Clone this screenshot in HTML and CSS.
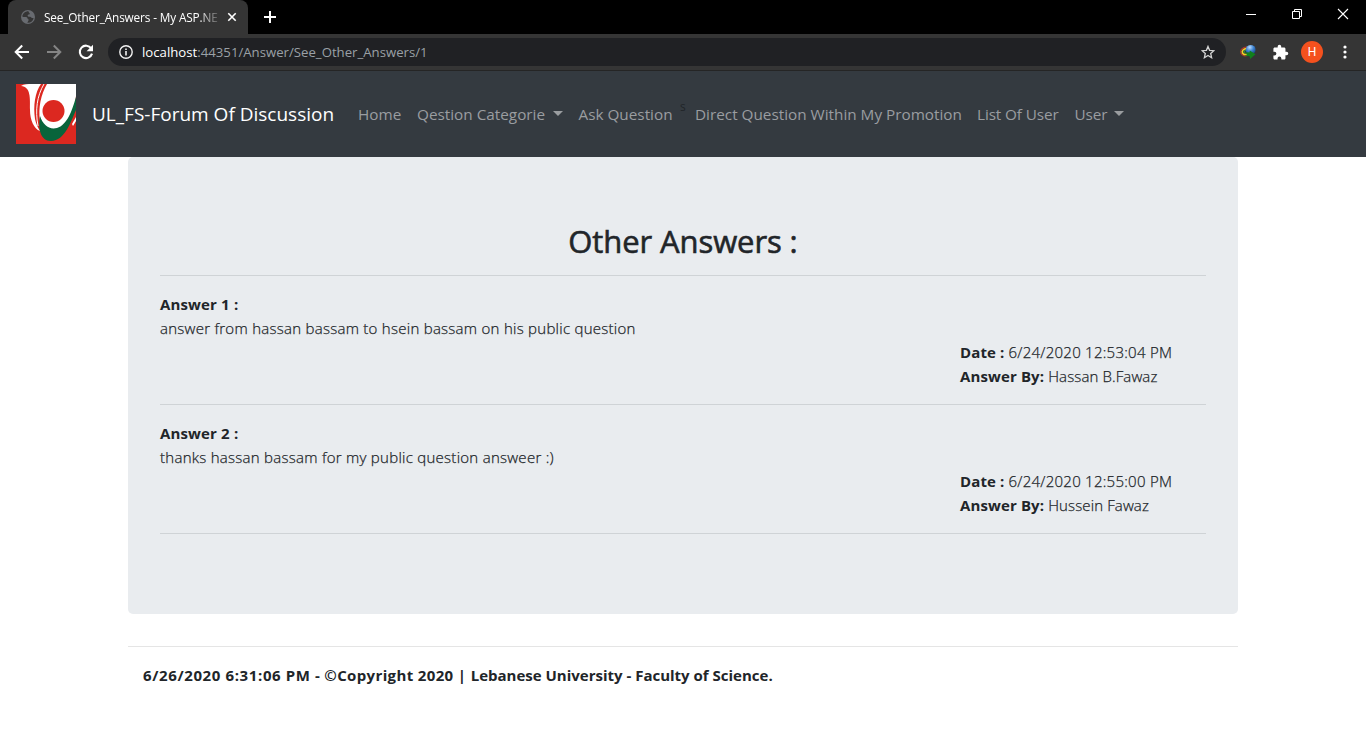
FILE: index.html
```
<!DOCTYPE html>
<html lang="en">
<head>
<meta charset="utf-8">
<title>See_Other_Answers - My ASP.NET Application</title>
<link rel="stylesheet" href="styles.css">
</head>
<body>
<div class="browser">
  <div class="tabstrip">
    <div class="tab">
      <svg class="favicon" viewBox="0 0 14 14"><circle cx="7" cy="7" r="7" fill="#686b70"/><path d="M7.6 1.2C4.6 1 1.5 3.3 1.3 6.4c1 .9 2.700.6 3.700.6 1.300 0 1.600 1.200 1.700 2 .9.1 1.300.7.8 1.600L6.300 12.700c3.500.3 5.800-1.900 6.300-4.800-1.300.5-2.100-.2-2.900-.9-.8-.6-1.700-.1-2.600-.6-.8-.6-.5-1.700.5-1.900 1.100-.1 1.600-.9.8-1.600-.5-.5-1-.8-.8-1.700z" fill="#353535"/></svg>
      <span class="tab-title">See_Other_Answers - My ASP.NE</span>
      <svg class="tab-close" viewBox="0 0 10 10"><path d="M1.300 1.300l7.400 7.400M8.700 1.300L1.300 8.700" stroke="#fff" stroke-width="1.600"/></svg>
    </div>
    <svg class="new-tab" viewBox="0 0 12 12"><path d="M6 0v12M0 6h12" stroke="#fff" stroke-width="2"/></svg>
    <div class="window-controls">
      <svg viewBox="0 0 12 12"><path d="M1 6.500h10" stroke="#fff"/></svg>
      <svg viewBox="0 0 12 12"><path d="M1.500 3.500h7v7h-7zM3.500 3.500v-2h7v7h-2" fill="none" stroke="#fff"/></svg>
      <svg viewBox="0 0 12 12"><path d="M1 1l10 10M11 1L1 11" stroke="#fff" stroke-width="1.100"/></svg>
    </div>
  </div>
  <div class="toolbar">
    <svg class="tool back" viewBox="0 0 16 16"><path d="M15 8H2M8.200 1.500L1.700 8l6.500 6.500" fill="none" stroke="#fff" stroke-width="2"/></svg>
    <svg class="tool forward" viewBox="0 0 16 16"><path d="M1 8h13M7.800 1.500L14.300 8l-6.500 6.500" fill="none" stroke="#858585" stroke-width="2"/></svg>
    <svg class="tool reload" viewBox="0 0 16 16"><path d="M13.200 4.400A6.200 6.200 0 1 0 14 9.600" fill="none" stroke="#fff" stroke-width="2.100"/><path d="M15 .8v6.400H8.600z" fill="#fff"/></svg>
    <div class="address">
      <svg class="info" viewBox="0 0 14 14"><circle cx="7" cy="7" r="6.200" fill="none" stroke="#f1f1f1" stroke-width="1.400"/><path d="M7 6v4.500M7 3.400V5" stroke="#f1f1f1" stroke-width="1.600"/></svg>
      <span class="url"><span class="host">localhost</span>:44351/Answer/See_Other_Answers/1</span>
      <svg class="star" viewBox="0 0 14 14"><path d="M7 1.400l1.600 3.900 4.300.4-3.200 2.800.9 4.200L7 10.500l-3.600 2.200.9-4.200-3.200-2.800 4.300-.4z" fill="none" stroke="#d5d5d5" stroke-width="1.300"/></svg>
    </div>
    <svg class="idm" viewBox="0 0 16 16">
      <defs><radialGradient id="globe" cx=".4" cy=".25" r=".8"><stop offset="0" stop-color="#b9dcff"/><stop offset=".5" stop-color="#3b81cf"/><stop offset="1" stop-color="#123d78"/></radialGradient></defs>
      <path d="M7 3.200C2.500 3 0 6 .9 9c.9 2.600 4 3.400 7 2.500" fill="none" stroke="#a8352a" stroke-width="1.300"/>
      <path d="M7 4.600C3.500 4.500 1.500 7 2.500 9c.9 1.600 3 1.900 5 1.400" fill="none" stroke="#f3cf27" stroke-width="1.600"/>
      <path d="M6.500 6C4.500 6.300 3.400 7.600 4.300 9" fill="none" stroke="#2f9c48" stroke-width="1.200"/>
      <circle cx="10.700" cy="5.800" r="4.900" fill="url(#globe)"/>
      <path d="M4.500 8.200l5 .4.300-2 5.700 3.600-5.300 4.800-.6-2.800-5.300-.6 3-1.400z" fill="#11801c"/>
    </svg>
    <svg class="puzzle" viewBox="0 0 24 24"><path fill="#fff" d="M20.500 11H19V7c0-1.100-.9-2-2-2h-4V3.500a2.500 2.500 0 0 0-5 0V5H4c-1.100 0-2 .9-2 2v3.800h1.500a2.700 2.700 0 0 1 0 5.400H2V20c0 1.100.9 2 2 2h3.800v-1.500a2.700 2.700 0 0 1 5.400 0V22H17c1.100 0 2-.9 2-2v-4h1.500a2.500 2.500 0 0 0 0-5z"/></svg>
    <span class="avatar">H</span>
    <svg class="menu" viewBox="0 0 4 14"><circle cx="2" cy="2" r="1.600" fill="#fff"/><circle cx="2" cy="7" r="1.600" fill="#fff"/><circle cx="2" cy="12" r="1.600" fill="#fff"/></svg>
  </div>
</div>

<nav class="navbar">
  <svg class="logo" viewBox="0 0 60 60">
    <path d="M0 0h60v60H0z" fill="#dc2820"/>
    <path d="M5 2C8 0 12 0 16 0h9C19 8 17 22 19 35c1 5 3 9 5 12C18 45 14 36 14 26 14 14 15 3 5 2z" fill="#fff"/>
    <path d="M28 0C21 12 19 26 22 42" fill="none" stroke="#fff" stroke-width="1"/>
    <path d="M31 0h29v12C58 31 50 50 36 50c-8 0-11-5-12-13-2-13 1-27 7-37z" fill="#fff"/>
    <path d="M56 40l4-7v4l-3 5z" fill="#fff"/>
    <path d="M60 13c-4 14-9 28-19 31-8 2-14-3-17-12-2 12 0 25 11 25 14 0 20-20 25-31z" fill="#08643b"/>
    <circle cx="37.500" cy="27" r="11" fill="#dc2820"/>
  </svg>
  <span class="brand">UL_FS-Forum Of Discussion</span>
  <div class="nav-links">
    <span class="n-home">Home</span>
    <span class="n-category caret">Qestion Categorie</span>
    <span class="n-ask">Ask Question</span>
    <span class="stray">s</span>
    <span class="n-direct">Direct Question Within My Promotion</span>
    <span class="n-list">List Of User</span>
    <span class="n-user caret">User</span>
  </div>
</nav>

<div class="container">
  <main class="jumbotron">
    <h2>Other Answers :</h2>
    <section class="answer">
      <b class="answer-title">Answer 1 :</b>
      <p>answer from hassan bassam to hsein bassam on his public question</p>
      <div class="meta"><div><b>Date :</b> <span class="date">6/24/2020 12:53:04 PM</span></div><div><b>Answer By:</b> <span>Hassan B.Fawaz</span></div></div>
    </section>
    <section class="answer">
      <b class="answer-title">Answer 2 :</b>
      <p>thanks hassan bassam for my public question answeer :)</p>
      <div class="meta"><div><b>Date :</b> <span class="date">6/24/2020 12:55:00 PM</span></div><div><b>Answer By:</b> <span>Hussein Fawaz</span></div></div>
    </section>
    <hr>
  </main>
  <footer><b><span class="timestamp">6/26/2020 6:31:06 PM</span><span class="copyright"> - ©Copyright 2020 | </span>Lebanese University - Faculty of Science.</b></footer>
</div>
</body>
</html>
```
FILE: styles.css
```
* { box-sizing: border-box; }
body { margin: 0; background: #fff; color: #212529; font: 15px/24px "Open Sans", "Noto Sans", sans-serif; overflow: hidden; }
svg { display: block; flex: none; }
span, b { white-space: nowrap; }
b { font-weight: 700; -webkit-text-stroke: 0; }

.tabstrip { height: 34px; background: #000; display: flex; align-items: center; padding-left: 8px; }
.tab { width: 240px; height: 34px; background: #353535; border-radius: 8px 8px 0 0; display: flex; align-items: center; padding: 0 11px 0 13px; color: #fff; }
.favicon { width: 14px; height: 14px; }
.tab-title { width: 176px; margin-left: 9px; font-size: 11.800px; letter-spacing: -.14px; -webkit-mask-image: linear-gradient(90deg, #000 88%, transparent 102%); mask-image: linear-gradient(90deg, #000 88%, transparent 102%); }
.tab-close { width: 10px; height: 10px; margin-left: 8px; }
.new-tab { width: 12px; height: 12px; margin-left: 16px; }
.window-controls { margin: -6px 17px 0 auto; display: flex; gap: 34px; }
.window-controls svg { width: 12px; height: 12px; }

.toolbar { height: 37px; background: #353535; border-bottom: 1px solid #252525; display: flex; align-items: center; padding-left: 14px; }
.tool { width: 16px; height: 16px; }
.forward, .reload { margin-left: 16px; }
.address { width: 1118px; height: 28px; margin-left: 14px; border-radius: 14px; background: #202124; display: flex; align-items: center; padding: 0 11px; }
.info { width: 14px; height: 14px; }
.url { flex: 1; margin-left: 9px; color: #9aa0a6; font-size: 13.2px; }
.host { color: #fff; }
.star { width: 14px; height: 14px; }
.idm { width: 16px; height: 16px; margin-left: 14px; }
.puzzle { width: 17px; height: 17px; margin-left: 16px; }
.avatar { width: 22px; height: 22px; margin-left: 12px; border-radius: 50%; background: #f4511e; color: #fff; font: 12px/22px Roboto, sans-serif; text-align: center; }
.menu { width: 4px; height: 14px; margin-left: 19.500px; }

.navbar { height: 86px; background: #343a40; display: flex; align-items: center; padding-left: 16px; }
.logo { width: 60px; height: 60px; }
.brand { width: 266px; margin-left: 16px; color: #fff; font-size: 19px; line-height: 30px; }
.nav-links { display: flex; color: #9a9da0; font-size: 15.300px; }
.nav-links span { flex: none; }
.n-home { width: 59px; }
.n-category { width: 161.500px; }
.n-ask { width: 101.500px; }
.stray { width: 15px; margin-top: -7px; color: #212529; font-size: 12px; }
.n-direct { width: 282px; }
.n-list { width: 97.500px; letter-spacing: -.1px; }
.n-user { letter-spacing: -.1px; }
.caret::after { content: ""; display: inline-block; margin-left: 8px; vertical-align: 4px; border: 5px solid transparent; border-top-color: currentColor; border-bottom: 0; }
.n-user::after { margin-left: 7px; }

.container { width: 1110px; margin: 0 auto; }
.jumbotron { height: 457px; padding: 64px 32px; border-radius: 5px; background: #e9ecef; }
h2 { margin: 0 0 16px; height: 38px; font-size: 31px; line-height: 40px; font-weight: 400; letter-spacing: -.1px; text-align: center; -webkit-text-stroke: .6px #212529; }
hr, .answer { border: 0; border-top: 1px solid #cfd3d6; }
.answer { height: 129px; padding-top: 16px; }
.answer-title { display: block; letter-spacing: .15px; }
p { margin: 0; white-space: nowrap; font-weight: 300; letter-spacing: .27px; -webkit-text-stroke: .25px #212529; }
.meta { margin-left: 800px; font-weight: 300; letter-spacing: .12px; -webkit-text-stroke: .25px #212529; }
.date { letter-spacing: .26px; }
hr { margin: 0; }
footer { margin-top: 32px; padding: 16px 15px; border-top: 1px solid #e5e5e5; }
.timestamp { letter-spacing: .62px; }
.copyright { letter-spacing: .36px; }
```
